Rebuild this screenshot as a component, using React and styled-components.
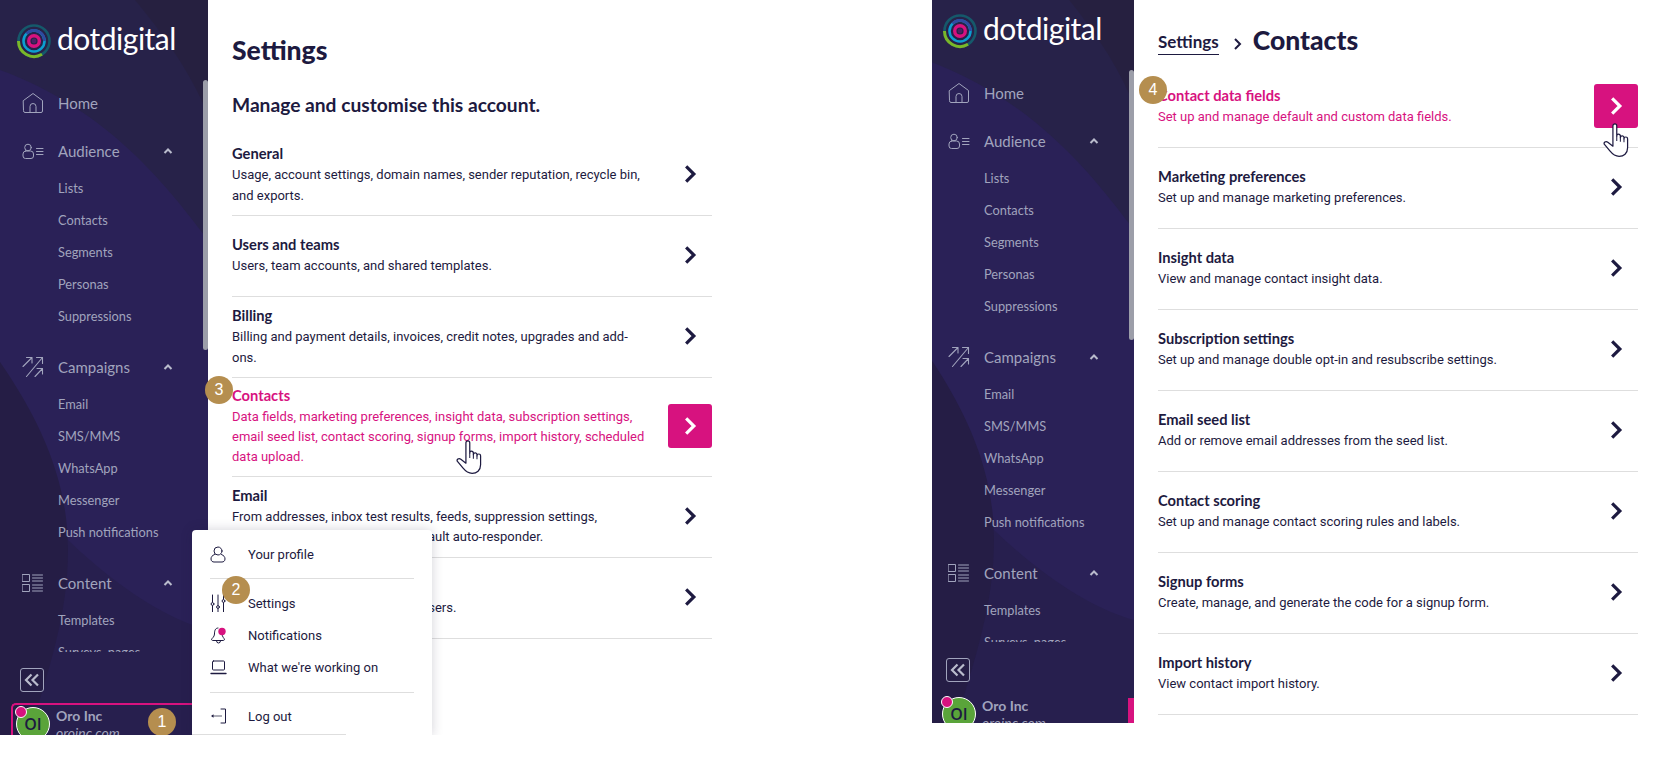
import React from 'react'
import styled, { createGlobalStyle } from 'styled-components'

const GlobalStyle = createGlobalStyle`
  html, body {
    margin: 0;
    padding: 0;
    background: #fff;
    overflow: hidden;
  }
  * { box-sizing: border-box; }
  body {
    font-family: Roboto, "Liberation Sans", sans-serif;
    color: #1d1a40;
  }
`

const Page = styled.div`
  display: flex;
  gap: 212px;
  width: 1674px;
  height: 763px;
  align-items: flex-start;
`

const Panel = styled.div`
  position: relative;
  display: flex;
  flex: ${p => (p.$wide ? '1' : '0 0 720px')};
  height: ${p => p.$height}px;
  overflow: hidden;
`

const Side = styled.aside`
  position: relative;
  display: flex;
  flex-direction: column;
  flex: 0 0 ${p => 208 - p.$crop}px;
  height: 100%;
  overflow: hidden;
  background: #2a2157;
`

const Decor = styled.svg`
  position: absolute;
  top: ${p => p.$shift}px;
  left: ${p => -p.$crop}px;
`

const LogoRow = styled.div`
  position: relative;
  display: flex;
  align-items: flex-start;
  gap: 5px;
  height: ${p => p.$height}px;
  padding-left: ${p => 16 - p.$crop}px;
  padding-top: ${p => p.$height - 55}px;
`

const LogoText = styled.span`
  margin-top: -4px;
  font-family: Lato, sans-serif;
  font-size: 30px;
  line-height: 38px;
  color: #fff;
  letter-spacing: -0.5px;
`

const Nav = styled.nav`
  position: relative;
  flex: 0 0 574px;
  padding: 9px 0 0 ${p => 22 - p.$crop}px;
  overflow: hidden;
  font-family: Lato, sans-serif;
`

const Scrollbar = styled.div`
  position: absolute;
  top: ${p => p.$top}px;
  right: 0;
  width: 5px;
  height: 270px;
  border-radius: 3px;
  background: #9c9ea9;
`

const Section = styled.div`
  margin-bottom: ${p => (p.$tight ? 16 : 19)}px;
`

const SectionHead = styled.div`
  display: flex;
  align-items: center;
  height: 32px;
  color: #a1a4bd;
  font-size: 15px;
`

const IconSlot = styled.span`
  display: flex;
  flex: 0 0 36px;
  align-items: center;
`

const Caret = styled.svg`
  position: absolute;
  left: ${p => 162 - p.$crop}px;
`

const SubList = styled.div`
  margin-top: 5px;
  padding-left: 36px;
`

const SubItem = styled.div`
  height: 32px;
  line-height: 32px;
  font-size: 12.8px;
  color: #a1a4bd;
  white-space: nowrap;
`

const Footer = styled.div`
  position: relative;
  flex: 1;
  min-height: 0;
  padding-top: 16px;
`

const Collapse = styled.div`
  display: flex;
  align-items: center;
  justify-content: center;
  width: 24px;
  height: 24px;
  margin-left: ${p => 20 - p.$crop}px;
  border: 1px solid #a1a4bd;
  border-radius: 3px;
  color: #b9bbcc;
`

const UserRow = styled.div`
  position: relative;
  display: flex;
  gap: 6px;
  height: 60px;
  margin: 11px 0 0 ${p => 11 - p.$crop}px;
  padding: 2px 0 0 3px;
  border: ${p => (p.$active ? '2px solid #d7127f' : '2px solid transparent')};
  border-right: 0;
  border-radius: 5px 0 0 0;
`

const Avatar = styled.div`
  position: relative;
  display: flex;
  flex: 0 0 34px;
  align-items: center;
  justify-content: center;
  height: 34px;
  border: 1px solid #fff;
  border-radius: 50%;
  background: #5aa43a;
  color: #1d1a40;
  font-family: "Open Sans", sans-serif;
  font-size: 16px;
  font-weight: 600;
`

const AvatarDot = styled.span`
  position: absolute;
  top: -2px;
  left: -2px;
  width: 12px;
  height: 12px;
  border: 1px solid #fff;
  border-radius: 50%;
  background: #d7127f;
`

const UserText = styled.div`
  font-family: Lato, sans-serif;
  color: #a1a4bd;
  line-height: 17px;
`

const UserName = styled.div`
  font-size: 14px;
  font-weight: 700;
`

const UserSite = styled.div`
  font-size: 14px;
  font-style: italic;
`

const ActiveTab = styled.div`
  position: absolute;
  right: 0;
  bottom: 0;
  width: 6px;
  height: 25px;
  background: #d7127f;
`

const Main = styled.main`
  flex: 1;
  padding: 0 ${p => p.$right}px 0 24px;
`

const PageTitle = styled.h1`
  margin: 0;
  padding-top: 36px;
  font-family: Lato, sans-serif;
  font-size: 26.500px;
  font-weight: 900;
  line-height: 28px;
`

const SubTitle = styled.h2`
  margin: 0;
  padding: 28px 0 18px;
  font-family: Lato, sans-serif;
  font-size: 19.200px;
  font-weight: 700;
  line-height: 25px;
`

const Crumbs = styled.div`
  display: flex;
  align-items: center;
  height: 67px;
  padding-top: 13px;
`

const CrumbLink = styled.span`
  margin-top: 6px;
  padding-bottom: 2px;
  border-bottom: 1px solid #1d1a40;
  font-family: Lato, sans-serif;
  font-size: 17px;
  font-weight: 700;
`

const CrumbTitle = styled.span`
  font-family: Lato, sans-serif;
  font-size: 26.500px;
  font-weight: 900;
`

const CrumbSep = styled.svg`
  margin: 8px 9px 0 13px;
`

const Row = styled.div`
  display: flex;
  align-items: center;
  justify-content: space-between;
  min-height: 81px;
  padding: 6px 0 8px;
  border-bottom: 1px solid #dedede;
  color: ${p => (p.$hot ? '#d7127f' : '#1d1a40')};
`

const RowText = styled.div`
  width: 420px;
  font-size: 13px;
  line-height: 20.200px;
`

const RowTitle = styled.div`
  font-family: Lato, sans-serif;
  font-size: 14.700px;
  font-weight: 700;
  line-height: 23px;
`

const Arrow = styled.div`
  position: relative;
  display: flex;
  flex: 0 0 44px;
  align-items: center;
  justify-content: center;
  height: 44px;
  border-radius: 3px;
  background: ${p => (p.$hot ? '#d7127f' : 'transparent')};
  color: ${p => (p.$hot ? '#fff' : '#1d1a40')};
`

const Badge = styled.span`
  position: absolute;
  top: ${p => p.$y - 14}px;
  left: ${p => p.$x - 14}px;
  z-index: 5;
  display: flex;
  align-items: center;
  justify-content: center;
  width: 28px;
  height: 28px;
  border-radius: 50%;
  background: #b58e4f;
  color: #fff;
  font-family: "Liberation Sans", sans-serif;
  font-size: 16px;
`

const HandWrap = styled.svg`
  position: absolute;
  top: ${p => p.$y}px;
  left: ${p => p.$x}px;
  z-index: 6;
`

const Menu = styled.div`
  position: absolute;
  top: 530px;
  left: 192px;
  z-index: 4;
  width: 240px;
  height: 206px;
  padding: 0 18px;
  border-radius: 4px 4px 0 0;
  background: #fff;
  box-shadow: 0 0 12px rgba(30, 25, 60, 0.2);
`

const MenuItem = styled.div`
  display: flex;
  align-items: center;
  height: ${p => p.$h || 32}px;
  font-size: 13px;
  color: #1d1a40;
`

const MenuIcon = styled.span`
  display: flex;
  flex: 0 0 38px;
  align-items: center;
`

const MenuRule = styled.div`
  height: 1px;
  margin: ${p => p.$gap || 0};
  background: #dedede;
`

const MenuEdge = styled.div`
  position: absolute;
  bottom: 1px;
  left: 0;
  width: 154px;
  height: 1px;
  background: #dedede;
`

const stroke = { fill: 'none', stroke: 'currentColor', strokeWidth: 1, strokeLinecap: 'round', strokeLinejoin: 'round' }

const Logo = () => (
  <svg width="36" height="36" viewBox="0 0 36 36">
    <g fill="none">
      <circle cx="18" cy="18" r="15.500" stroke="#15596b" strokeWidth="2.600" />
      <path d="M2.500 18A15.500 15.500 0 0 0 26 31.300" stroke="#7ab829" strokeWidth="3" />
      <circle cx="18" cy="18" r="10.500" stroke="#0c9ed0" strokeWidth="2.600" />
      <path d="M28.500 18A10.500 10.500 0 0 0 10.500 10.700" stroke="#2f4aa0" strokeWidth="2.600" />
      <circle cx="18" cy="18" r="5.300" stroke="#d7127f" strokeWidth="3.400" />
      <circle cx="18" cy="18" r="2.400" fill="#4a2265" />
    </g>
  </svg>
)

const HomeIcon = () => (
  <svg width="22" height="22" viewBox="0 0 22 22" {...stroke}>
    <path d="M1.500 8.500 11 1.500l9.500 7v10.500a1.500 1.500 0 0 1-1.500 1.500H3a1.500 1.500 0 0 1-1.500-1.500z" />
    <path d="M8 20.500v-6a3 3 0 0 1 6 0v6" />
  </svg>
)

const AudienceIcon = () => (
  <svg width="22" height="16" viewBox="0 0 22 16" {...stroke}>
    <circle cx="6" cy="4.500" r="3.300" />
    <path d="M3.500 8h5a3 3 0 0 1 3 3v2a2.500 2.500 0 0 1-2.500 2.500H3.500A2.500 2.500 0 0 1 1 13v-2a3 3 0 0 1 2.500-3z" />
    <path d="M14.500 5.500h6.500M14.500 8.500h6.500M14.500 11.500h6.500" />
  </svg>
)

const CampaignIcon = () => (
  <svg width="22" height="22" viewBox="0 0 22 22" {...stroke} strokeWidth="1.100">
    <path d="M1 10.500 10 1.500M4.500 1.500H10V7" />
    <path d="M4.500 20.500 20.500 1.500M14.500 1.500h6v6" />
    <path d="M13 20.500 20.500 12.500M15 12.500h5.500V18" />
  </svg>
)

const ContentIcon = () => (
  <svg width="21" height="18" viewBox="0 0 21 18" {...stroke}>
    <rect x="0.500" y="0.500" width="7" height="7" />
    <rect x="0.500" y="10.500" width="7" height="7" />
    <path d="M10.500 1h10M10.500 4h10M10.500 7h10M10.500 11h10M10.500 14h10M10.500 17h10" />
  </svg>
)

const CaretUp = ({ crop }) => (
  <Caret $crop={crop} width="12" height="8" viewBox="0 0 12 8">
    <path d="M2.500 6 6 2.500 9.500 6" fill="none" stroke="#b9bbcc" strokeWidth="2" />
  </Caret>
)

const ChevronRight = () => (
  <svg width="22" height="22" viewBox="0 0 16 16">
    <path d="M5.200 2.500 10.800 8l-5.600 5.500" fill="none" stroke="currentColor" strokeWidth="2.300" />
  </svg>
)

const Hand = ({ x, y }) => (
  <HandWrap $x={x} $y={y} width="30" height="35" viewBox="0 0 26 31">
    <path
      d="M8.500 16V2.500a1.700 1.700 0 0 1 3.400 0V11.500a1.600 1.600 0 0 1 3.200 0V13a1.600 1.600 0 0 1 3.200 0V14a1.600 1.600 0 0 1 3.200 0V22C21.500 27 18 29.500 14 29.500 10 29.500 8 27.500 6 25L1 19C0 17.500 2 15.500 4 17L8.500 20.500Z"
      fill="#fff"
      stroke="#1d1a40"
      strokeWidth="1.100"
      strokeLinejoin="round"
    />
    <path d="M11.900 11.500V16M15.100 13V16.500M18.300 14V17" fill="none" stroke="#1d1a40" strokeWidth="0.900" />
  </HandWrap>
)

const sections = [
  { name: 'Home', icon: <HomeIcon />, items: [] },
  { name: 'Audience', icon: <AudienceIcon />, items: ['Lists', 'Contacts', 'Segments', 'Personas', 'Suppressions'] },
  { name: 'Campaigns', icon: <CampaignIcon />, items: ['Email', 'SMS/MMS', 'WhatsApp', 'Messenger', 'Push notifications'] },
  { name: 'Content', icon: <ContentIcon />, items: ['Templates', 'Surveys, pages'] },
]

const SideBar = ({ crop, logoHeight, shift, active, tab, barTop }) => (
  <Side $crop={crop}>
    <Decor $crop={crop} $shift={shift} width="208" height="760" viewBox="0 0 208 760">
      <path d="M0 0H208V240C170 190 110 110 0 70Z" fill="#272249" />
      <path d="M135 0H208V115C190 70 160 30 135 0Z" fill="#262040" />
      <path d="M68 540C120 590 170 620 208 630V760H22C45 680 68 620 68 540Z" fill="#271f4e" />
      <path d="M0 362C40 420 68 480 68 550C68 620 45 680 22 760H0Z" fill="#251d45" />
    </Decor>
    <LogoRow $crop={crop} $height={logoHeight}>
      <Logo />
      <LogoText>dotdigital</LogoText>
    </LogoRow>
    <Nav $crop={crop}>
      {sections.map(section => (
        <Section key={section.name} $tight={!section.items.length}>
          <SectionHead>
            <IconSlot>{section.icon}</IconSlot>
            {section.name}
            {section.items.length > 0 && <CaretUp crop={crop} />}
          </SectionHead>
          {section.items.length > 0 && (
            <SubList>
              {section.items.map(item => <SubItem key={item}>{item}</SubItem>)}
            </SubList>
          )}
        </Section>
      ))}
    </Nav>
    <Scrollbar $top={barTop} />
    <Footer>
      <Collapse $crop={crop}>
        <svg width="18" height="16" viewBox="0 0 18 16">
          <path d="M8.500 2.500 3 8l5.500 5.500M15 2.500 9.500 8l5.500 5.500" fill="none" stroke="currentColor" strokeWidth="2.200" />
        </svg>
      </Collapse>
      <UserRow $crop={crop} $active={active}>
        <Avatar>
          OI
          <AvatarDot />
        </Avatar>
        <UserText>
          <UserName>Oro Inc</UserName>
          <UserSite>oroinc.com</UserSite>
        </UserText>
      </UserRow>
      {tab && <ActiveTab />}
    </Footer>
  </Side>
)

const ListRow = ({ title, text, hot }) => (
  <Row $hot={hot}>
    <RowText>
      <RowTitle>{title}</RowTitle>
      {text}
    </RowText>
    <Arrow $hot={hot}>
      <ChevronRight />
    </Arrow>
  </Row>
)

const accountRows = [
  { title: 'General', text: 'Usage, account settings, domain names, sender reputation, recycle bin, and exports.' },
  { title: 'Users and teams', text: 'Users, team accounts, and shared templates.' },
  { title: 'Billing', text: 'Billing and payment details, invoices, credit notes, upgrades and add-ons.' },
  { title: 'Contacts', text: 'Data fields, marketing preferences, insight data, subscription settings, email seed list, contact scoring, signup forms, import history, scheduled data upload.', hot: true },
  { title: 'Email', text: 'From addresses, inbox test results, feeds, suppression settings, transactional email settings, & default auto-responder.' },
  { title: 'Access', text: 'Manage API keys and details for users.' },
]

const contactRows = [
  { title: 'Contact data fields', text: 'Set up and manage default and custom data fields.', hot: true },
  { title: 'Marketing preferences', text: 'Set up and manage marketing preferences.' },
  { title: 'Insight data', text: 'View and manage contact insight data.' },
  { title: 'Subscription settings', text: 'Set up and manage double opt-in and resubscribe settings.' },
  { title: 'Email seed list', text: 'Add or remove email addresses from the seed list.' },
  { title: 'Contact scoring', text: 'Set up and manage contact scoring rules and labels.' },
  { title: 'Signup forms', text: 'Create, manage, and generate the code for a signup form.' },
  { title: 'Import history', text: 'View contact import history.' },
]

const UserMenu = () => (
  <Menu>
    <MenuItem $h={48}>
      <MenuIcon>
        <svg width="16" height="17" viewBox="0 0 16 17" {...stroke}>
          <circle cx="8" cy="5" r="4" />
          <path d="M4.500 8.500C2 9.500 1 11 1 13c0 2 1.500 3 3 3h8c1.500 0 3-1 3-3 0-2-1-3.500-3.500-4.500" />
        </svg>
      </MenuIcon>
      Your profile
    </MenuItem>
    <MenuRule $gap="0 0 8px" />
    <MenuItem>
      <MenuIcon>
        <svg width="16" height="18" viewBox="0 0 16 18" {...stroke}>
          <path d="M2.500 1v17M8 1v17M13.500 1v17" />
          <circle cx="2.500" cy="10" r="1.400" fill="#fff" />
          <circle cx="8" cy="13" r="1.400" fill="#fff" />
          <circle cx="13.500" cy="7" r="1.400" fill="#fff" />
        </svg>
      </MenuIcon>
      Settings
    </MenuItem>
    <MenuItem>
      <MenuIcon>
        <svg width="18" height="18" viewBox="0 0 18 18">
          <path d="M8 2C5 2 4.500 5 4.500 8c0 3-3 4.500-3 5.500 0 .8 1 1 2.500 1h8c1.500 0 2.500-.2 2.500-1 0-1-2.500-2.500-2.500-5.500M6.500 15a2 2 0 0 0 4 0" {...stroke} />
          <circle cx="12" cy="5.500" r="3.700" fill="#d7127f" />
        </svg>
      </MenuIcon>
      Notifications
    </MenuItem>
    <MenuItem>
      <MenuIcon>
        <svg width="17" height="15" viewBox="0 0 17 15" {...stroke}>
          <rect x="2.500" y="1" width="12" height="9" rx="1" />
          <path d="M1 13.500h15" strokeWidth="1.400" />
        </svg>
      </MenuIcon>
      What we're working on
    </MenuItem>
    <MenuRule $gap="9px 0 7px" />
    <MenuItem>
      <MenuIcon>
        <svg width="17" height="16" viewBox="0 0 17 16">
          <path d="M11 1h4.500v14H11" {...stroke} />
          <path d="M2 8h10" stroke="#8a8a98" strokeWidth="1.400" fill="none" />
          <path d="M1 8l2.500-1.800v3.600z" fill="#1d1a40" />
        </svg>
      </MenuIcon>
      Log out
    </MenuItem>
    <MenuEdge />
  </Menu>
)

export default function App() {
  return (
    <>
      <GlobalStyle />
      <Page>
        <Panel $height={735}>
          <SideBar crop={0} logoHeight={78} shift={0} active barTop={80} />
          <Main $right={8}>
            <PageTitle>Settings</PageTitle>
            <SubTitle>Manage and customise this account.</SubTitle>
            {accountRows.map(row => <ListRow key={row.title} {...row} />)}
          </Main>
          <UserMenu />
          <Badge $x={162} $y={722}>1</Badge>
          <Badge $x={236} $y={590}>2</Badge>
          <Badge $x={219} $y={390}>3</Badge>
          <Hand x={456} y={440} />
        </Panel>
        <Panel $wide $height={723}>
          <SideBar crop={6} logoHeight={68} shift={-10} tab barTop={70} />
          <Main $right={36}>
            <Crumbs>
              <CrumbLink>Settings</CrumbLink>
              <CrumbSep width="12" height="14" viewBox="0 0 12 14">
                <path d="M3 2l5 5-5 5" fill="none" stroke="#1d1a40" strokeWidth="2" />
              </CrumbSep>
              <CrumbTitle>Contacts</CrumbTitle>
            </Crumbs>
            {contactRows.map(row => <ListRow key={row.title} {...row} />)}
          </Main>
          <Badge $x={221} $y={90}>4</Badge>
          <Hand x={671} y={123} />
        </Panel>
      </Page>
    </>
  )
}
